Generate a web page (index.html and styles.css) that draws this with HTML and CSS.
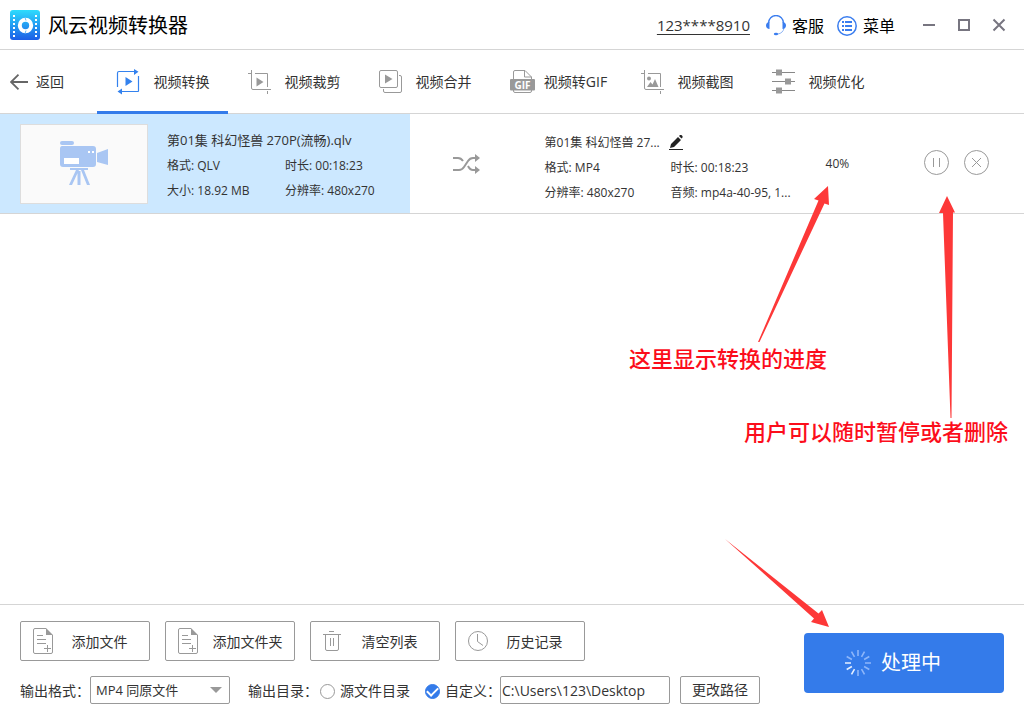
FILE: index.html
```html
<!DOCTYPE html>
<html lang="zh-CN">
<head>
<meta charset="utf-8">
<title>风云视频转换器</title>
<link rel="stylesheet" href="styles.css">
</head>
<body>
<div class="app">
  <header class="titlebar">
    <svg class="logo" width="30" height="30" viewBox="0 0 30 30">
      <defs><linearGradient id="lg" x1="0" y1="0" x2="0" y2="1"><stop offset="0" stop-color="#2edcfd"/><stop offset="1" stop-color="#1c5ee6"/></linearGradient></defs>
      <rect width="30" height="30" rx="3" fill="url(#lg)"/>
      <path d="M4 5v22M26 5v22" stroke="#fff" stroke-width="2" stroke-dasharray="2 2"/>
      <circle cx="15.500" cy="15.500" r="5.700" fill="none" stroke="#fff" stroke-width="4"/>
      <path d="M15 7.500l1 3M16 20.500l-1 3" stroke="#62b8f8" stroke-width="1"/>
    </svg>
    <h1 class="title">风云视频转换器</h1>
    <a class="account" href="#">123****8910</a>
    <button class="link-btn service">
      <svg width="20" height="21" viewBox="0 0 20 21"><path d="M2.500 8a7.500 7.500 0 0 1 15 0" fill="none" stroke="#3a7def" stroke-width="1.300"/><path d="M18 13c-.500 3.500-3 5.500-6 6" fill="none" stroke="#8db4f5"/><path d="M3.500 7v7C1.500 14 0 12.500 0 10.500S1.500 7 3.500 7zM16.500 7v7c2 0 3.500-1.500 3.500-3.500S18.500 7 16.500 7z" fill="#3a7def"/><ellipse cx="10" cy="19" rx="2.200" ry="1.300" fill="#3a7def"/></svg>
      <span>客服</span>
    </button>
    <button class="link-btn">
      <svg width="20" height="20" viewBox="0 0 20 20"><circle cx="10" cy="10" r="9.200" fill="none" stroke="#3a7def" stroke-width="1.500"/><path d="M5 6h2M5 10h2M5 14h2M8 6h7M8 10h7M8 14h7" stroke="#3a7def" stroke-width="1.800"/></svg>
      <span>菜单</span>
    </button>
    <div class="window-controls">
      <button aria-label="最小化"><svg width="14" height="14" viewBox="0 0 14 14"><path d="M1 7h12" stroke="#777580" stroke-width="2"/></svg></button>
      <button aria-label="最大化"><svg width="14" height="14" viewBox="0 0 14 14"><rect x="2" y="2" width="10" height="10" fill="none" stroke="#777580" stroke-width="2"/></svg></button>
      <button aria-label="关闭"><svg width="14" height="14" viewBox="0 0 14 14"><path d="M1.500 1.500l11 11M12.500 1.500l-11 11" stroke="#777580" stroke-width="2"/></svg></button>
    </div>
  </header>

  <nav class="toolbar">
    <button class="back">
      <svg width="18" height="16" viewBox="0 0 18 16"><path d="M18 8H1M8.500.700L1 8l7.500 7.300" fill="none" stroke="#666" stroke-width="1.800"/></svg>
      <span>返回</span>
    </button>
    <button class="tab active">
      <svg width="24" height="26" viewBox="0 0 24 26"><path d="M1.500 18V4q0-1.500 1.500-1.500h15M22.500 7v15q0 .500-.500.500H6" fill="none" stroke="#3482ee" stroke-width="1.200"/><path d="M18 0l4.500 2.800L18 6zM6 19.500l-4.500 3L6 25.500zM9.500 8l7 4.500-7 4.500z" fill="#3482ee"/></svg>
      <span>视频转换</span>
    </button>
    <button class="tab">
      <svg width="24" height="26" viewBox="0 0 24 26"><path d="M1 4.500h3M4.500 1v18q0 1.500 1.500 1.500h18M8 4.500h12.500V18M20.500 22v3" fill="none" stroke="#999"/><path d="M9.500 8.500l7 4.500-7 4.500z" fill="#999"/></svg>
      <span>视频裁剪</span>
    </button>
    <button class="tab">
      <svg width="24" height="26" viewBox="0 0 24 26"><rect x="1.500" y="1.500" width="18" height="17" rx="1.500" fill="none" stroke="#999"/><path d="M21 6.500h1q1.500 0 1.500 1.500v14q0 1.500-1.500 1.500H7q-1.500 0-1.500-1.500v-2" fill="none" stroke="#999"/><path d="M7 5.500l7.500 4.500L7 14.500z" fill="#999"/></svg>
      <span>视频合并</span>
    </button>
    <button class="tab">
      <svg width="26" height="26" viewBox="0 0 26 26"><path d="M4.500 10V3q0-1.500 1.500-1.500h10l6.500 6.500v2M15.500 1.500V8h7M4.500 21v1q0 1.500 1.500 1.500h15q1.500 0 1.500-1.500v-1" fill="none" stroke="#999"/><rect x="1" y="10" width="25" height="11.500" rx="1" fill="#999"/><text class="gif-text" x="13.500" y="19.500" text-anchor="middle">GIF</text></svg>
      <span>视频转GIF</span>
    </button>
    <button class="tab">
      <svg width="24" height="26" viewBox="0 0 24 26"><path d="M1 4.500h3M4.500 1v18q0 1.500 1.500 1.500h18M8 4.500h12.500V18M20.500 22v3" fill="none" stroke="#999"/><circle cx="9" cy="9.500" r="2" fill="#999"/><path d="M7 18l3.500-5 2 2.500L15 10l3.500 8z" fill="#999"/></svg>
      <span>视频截图</span>
    </button>
    <button class="tab">
      <svg width="24" height="26" viewBox="0 0 24 26"><path d="M1 3.500h23M1 12.500h23M1 21.500h23" stroke="#888"/><path d="M5 .500h6v6H5zM14 9.500h6v6h-6zM5 18.500h6v6H5z" fill="#999"/></svg>
      <span>视频优化</span>
    </button>
  </nav>

  <main class="list">
    <section class="item">
      <div class="source">
        <div class="thumb">
          <svg width="50" height="46" viewBox="0 0 50 46" fill="#a9c6f3"><rect x="1" y="0" width="14" height="4" rx="2"/><path d="M3 5h31q3 0 3 3v15q0 3-3 3H4q-3 0-3-3V8q0-3 2-3zM38 12l11-4v16l-11-3zM11 27h18v2H11zM17 29h3l-7 15h-3zM22 29h3l6 15h-3zM18.500 30h3v14h-3z"/><rect x="5" y="17" width="15" height="6" fill="#fff"/><path d="M29 10h2v2h-2zM33 10h2v2h-2z" fill="#fff"/></svg>
        </div>
        <div class="info">
          <div class="name">第01集 科幻怪兽 270P(流畅).qlv</div>
          <div class="cell">格式: QLV</div><div class="cell">时长: 00:18:23</div>
          <div class="cell">大小: 18.92 MB</div><div class="cell">分辨率: 480x270</div>
        </div>
      </div>
      <div class="target">
        <div class="shuffle">
          <svg width="28" height="20" viewBox="0 0 28 20"><path d="M0 4h5q3 0 5 3M0 16h6q3 0 5-3l4-6q2-3 5-3h4M15 12q2 4 5 4h4" fill="none" stroke="#999" stroke-width="2"/><path d="M22 0l5 4-5 4zM22 12l5 4-5 4z" fill="#999"/></svg>
        </div>
        <div class="info">
          <div class="name">第01集 科幻怪兽 27...
            <button class="rename" aria-label="重命名"><svg width="14" height="15" viewBox="0 0 14 15"><path d="M2 9l7-7 3 3-7 7-4 1zM10 1l1-1q1-.500 2 .500t.500 2l-1 1z" fill="#222"/><path d="M0 14.500h14" stroke="#222"/></svg></button>
          </div>
          <div class="cell">格式: MP4</div><div class="cell">时长: 00:18:23</div>
          <div class="cell">分辨率: 480x270</div><div class="cell">音频: mp4a-40-95, 1...</div>
        </div>
        <div class="percent">40%</div>
        <div class="actions">
          <button aria-label="暂停"><svg width="25" height="25" viewBox="0 0 25 25" fill="none" stroke="#999"><circle cx="12.500" cy="12.500" r="12"/><path d="M9.500 8v9M15.500 8v9"/></svg></button>
          <button aria-label="删除"><svg width="25" height="25" viewBox="0 0 25 25" fill="none" stroke="#999"><circle cx="12.500" cy="12.500" r="12"/><path d="M8 8l9 9M17 8l-9 9"/></svg></button>
        </div>
      </div>
    </section>
  </main>

  <footer class="footer">
    <div class="controls">
      <div class="file-actions">
        <button class="box-btn"><svg width="22" height="28" viewBox="0 0 22 28"><path d="M14 1.500H3q-1.500 0-1.500 1.500v22q0 1.500 1.500 1.500h16q1.500 0 1.500-1.500V8M5 8.500h6M5 12.500h9M5 16.500h9M12 21.500h7M15.500 18v7" fill="none" stroke="#999"/><path d="M14 1l7 7h-7z" fill="#999"/></svg><span>添加文件</span></button>
        <button class="box-btn long"><svg width="22" height="28" viewBox="0 0 22 28"><path d="M14 1.500H3q-1.500 0-1.500 1.500v22q0 1.500 1.500 1.500h16q1.500 0 1.500-1.500V8M5 8.500h6M5 12.500h9M5 16.500h9M12 21.500h7M15.500 18v7" fill="none" stroke="#999"/><path d="M14 1l7 7h-7z" fill="#999"/></svg><span>添加文件夹</span></button>
        <button class="box-btn"><svg width="22" height="28" viewBox="0 0 22 28"><path d="M7 4.500h5M1 7.500h18M3.500 8v14q0 1.500 1.500 1.500h10q1.500 0 1.500-1.500V8M8.500 11v8M11.500 11v8" fill="none" stroke="#999"/></svg><span>清空列表</span></button>
        <button class="box-btn"><svg width="22" height="28" viewBox="0 0 22 28"><circle cx="11" cy="14" r="9.500" fill="none" stroke="#999"/><path d="M10.500 7v7.500l5.500 4" fill="none" stroke="#999"/></svg><span>历史记录</span></button>
      </div>
      <div class="output">
        <label for="format">输出格式：</label>
        <div class="select-wrap">
          <select id="format"><option>MP4 同原文件</option></select>
        </div>
        <span class="dir-label">输出目录：</span>
        <label class="radio"><input type="radio" name="dir"><span>源文件目录</span></label>
        <label class="radio custom"><input type="radio" name="dir" checked><span>自定义：</span></label>
        <input class="path" type="text" aria-label="输出路径" value="C:\Users\123\Desktop">
        <button class="change">更改路径</button>
      </div>
    </div>
    <button class="process">
      <svg width="26" height="26" viewBox="-13 -13 26 26" stroke="#8db6fa" stroke-width="1.600">
        <path d="M0-7v-6M3.500-6.100l3-5.200M6.100-3.500l5.200-3M7 0h6M6.100 3.500l5.200 3M3.500 6.100l3 5.200M0 7v6M-6.100-3.500l-5.200-3M-3.500-6.100l-3-5.200"/>
        <path d="M-7 0h-6M-6.100 3.500l-5.200 3M-3.500 6.100l-3 5.200" stroke="#e4efff"/>
      </svg>
      <span>处理中</span>
    </button>
  </footer>

  <div class="note note-progress">这里显示转换的进度</div>
  <div class="note note-actions">用户可以随时暂停或者删除</div>
  <svg class="arrow arrow-progress" width="72" height="158" viewBox="0 0 72 158"><path d="M70 1L56 14l4.500 1.500L0 157l1.500 0L66.500 18.500 71 20z"/></svg>
  <svg class="arrow arrow-actions" width="18" height="224" viewBox="0 0 18 224"><path d="M9 1L1 18h4l7.500 205h1L15 17.500h2z"/></svg>
  <svg class="arrow arrow-process" width="105" height="90" viewBox="0 0 105 90"><path d="M0 0L89 79.500 86 83l18 5-7-17-3.500 3.500z"/></svg>
</div>
</body>
</html>
```
FILE: styles.css
```css
* { box-sizing: border-box; }
body {
  margin: 0;
  background: #fff;
  color: #333;
  font: 14px/20px "Open Sans", "Noto Sans CJK SC", sans-serif;
}
button, input, select { font: inherit; color: inherit; }
button { padding: 0; border: 0; background: none; cursor: pointer; }
svg { display: block; flex: none; }

.app { position: relative; display: flex; flex-direction: column; min-height: 100vh; }

.titlebar {
  display: flex;
  align-items: center;
  height: 50px;
  padding: 0 18px 0 10px;
  border-bottom: 1px solid #d5d5d5;
  color: #000;
}
.title { margin: 0 auto 0 8px; padding-top: 2px; font-size: 20px; font-weight: 400; line-height: 30px; }
.account { color: #333; font-size: 15px; text-underline-offset: 3px; }
.link-btn { display: flex; align-items: center; gap: 6px; margin-left: 13px; padding-top: 2px; font-size: 16px; }
.service { margin-left: 16px; }
.window-controls { display: flex; gap: 21px; margin-left: 27px; }

.toolbar { display: flex; height: 64px; border-bottom: 1px solid #d5d5d5; }
.back { display: flex; align-items: center; gap: 8px; width: 97px; padding-left: 10px; }
.tab {
  display: flex;
  align-items: center;
  width: 131px;
  height: 64px;
  padding: 0 5px 0 19px;
  border-bottom: 3px solid transparent;
  border-top: 3px solid transparent;
}
.tab span { flex: 1; text-align: center; white-space: nowrap; }
.active { border-bottom-color: #347bea; }
.gif-text { fill: #fff; font: 700 10px "Open Sans", sans-serif; }

.list { flex: 1; }
.item { display: flex; height: 100px; border-bottom: 1px solid #d5d5d5; font-size: 12px; }
.source { display: flex; align-items: center; flex: 0 0 40%; gap: 19px; padding-left: 20px; background: #cce8ff; }
.thumb {
  display: flex;
  align-items: center;
  justify-content: center;
  width: 128px;
  height: 80px;
  border: 1px solid #ddd;
  background: #fafafa;
}
.info { display: grid; grid-template-columns: 118px 118px; padding-top: 4px; line-height: 25px; white-space: nowrap; }
.name { grid-column: 1 / -1; display: flex; align-items: center; gap: 9px; }
.source .name { font-size: 13px; }
.target { display: flex; align-items: center; flex: 1; padding-right: 35px; }
.target .info { grid-template-columns: 126px 126px; padding-top: 8px; }
.shuffle { width: 135px; padding-left: 43px; }
.percent { margin-left: 29px; }
.actions { display: flex; gap: 15px; margin-left: auto; padding-bottom: 2px; }

.footer {
  display: flex;
  align-items: center;
  justify-content: space-between;
  height: 116px;
  padding: 0 20px;
  border-top: 1px solid #d5d5d5;
}
.file-actions { display: flex; gap: 15px; }
.box-btn {
  display: flex;
  align-items: center;
  width: 130px;
  height: 40px;
  padding: 0 4px 0 11px;
  border: 1px solid #999;
  border-radius: 2px;
}
.box-btn span { flex: 1; padding-top: 2px; text-align: center; }
.box-btn.long span { padding-left: 6px; }
.output { display: flex; align-items: center; margin-top: 15px; white-space: nowrap; }
.output label, .dir-label { padding-top: 2px; }
.select-wrap { position: relative; width: 140px; }
.select-wrap::after {
  content: "";
  position: absolute;
  top: 11px;
  right: 8px;
  border: 6px solid transparent;
  border-top-color: #999;
  border-bottom: 0;
  pointer-events: none;
}
select {
  appearance: none;
  width: 100%;
  height: 28px;
  padding: 0 5px;
  border: 1px solid #999;
  border-radius: 2px;
  background: #fff;
  font-size: 13px;
}
.dir-label { margin-left: 18px; }
.radio { display: flex; align-items: center; gap: 5px; margin-left: 2px; }
.custom { width: 75px; margin-left: 15px; }
.radio input {
  display: grid;
  place-items: center;
  flex: none;
  appearance: none;
  width: 15px;
  height: 15px;
  margin: 0;
  border: 1px solid #999;
  border-radius: 50%;
}
.radio input:checked { border-color: #347bea; background: #347bea; }
.radio input:checked::before {
  content: "";
  width: 9px;
  height: 5px;
  border: solid #fff;
  border-width: 0 0 2px 2px;
  transform: translateY(-1px) rotate(-45deg);
}
.path { width: 170px; height: 28px; padding: 0 1px; border: 1px solid #999; border-radius: 2px; }
.change { width: 80px; height: 28px; margin-left: 10px; border: 1px solid #999; border-radius: 2px; }
.process {
  display: flex;
  align-items: center;
  gap: 10px;
  width: 200px;
  height: 60px;
  padding-left: 41px;
  border-radius: 4px;
  background: #347bea;
  color: #fff;
  font-size: 20px;
}

.note { position: absolute; color: #fc0d1b; font-size: 22px; font-weight: 500; line-height: 30px; white-space: nowrap; }
.note-progress { left: 629px; top: 343px; }
.note-actions { left: 744px; top: 416px; }
.arrow { position: absolute; fill: #fd3838; pointer-events: none; }
.arrow-progress { left: 758px; top: 185px; }
.arrow-actions { left: 938px; top: 195px; }
.arrow-process { left: 725px; top: 539px; }
```
